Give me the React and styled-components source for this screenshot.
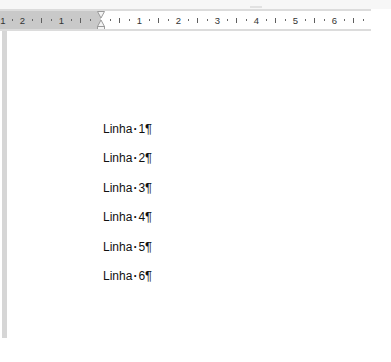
import React from 'react';
import styled, { createGlobalStyle } from 'styled-components';

const GlobalStyle = createGlobalStyle`
  html, body {
    margin: 0;
    background: #ffffff;
  }
  body {
    font-family: "Liberation Sans", Arial, sans-serif;
    overflow: hidden;
  }
`;

const TICK = 9.75;

// ruler marks from left edge, 0 sits under the indent marker
const marks = [
  '1', '.', '2', '.', '|', '.', '1', '.', '|', '.',
  'm',
  '.', '|', '.', '1', '.', '|', '.', '2', '.', '|', '.', '3', '.', '|', '.',
  '4', '.', '|', '.', '5', '.', '|', '.', '6', '.', '|', '.',
];

const lines = ['Linha', 'Linha', 'Linha', 'Linha', 'Linha', 'Linha'];

export default function App() {
  return (
    <Screen>
      <GlobalStyle />
      <TopStrip>
        <Grip />
      </TopStrip>
      <RulerRow>
        <Ruler>
          <Margin />
          <Ticks>
            {marks.map((m, i) => (
              <Cell key={i}>
                {m === '.' && <Dot />}
                {m === '|' && <Half />}
                {m !== '.' && m !== '|' && m !== 'm' && <Num>{m}</Num>}
              </Cell>
            ))}
          </Ticks>
          <IndentMarker width="10" height="22" viewBox="0 0 10 22">
            <path d="M1.5 0.5 H8.5 L5 7 Z" fill="#f4f4f4" stroke="#9a9a9a" strokeWidth="1" />
            <path d="M5 9 L8.5 15.5 H1.5 Z" fill="#f4f4f4" stroke="#9a9a9a" strokeWidth="1" />
            <rect x="1.5" y="15.5" width="7" height="5" fill="#f4f4f4" stroke="#9a9a9a" strokeWidth="1" />
          </IndentMarker>
        </Ruler>
      </RulerRow>
      <Body>
        <SideBar />
        <Page>
          {lines.map((t, i) => (
            <Line key={i}>
              {t}
              <Space>·</Space>
              {i + 1}
              <Pilcrow>¶</Pilcrow>
            </Line>
          ))}
        </Page>
      </Body>
    </Screen>
  );
}

const Screen = styled.div`
  width: 391px;
  height: 362px;
  background: #ffffff;
`;

const TopStrip = styled.div`
  height: 9px;
  background: #f7f7f7;
  display: flex;
  padding-left: 250px;
`;

const Grip = styled.div`
  width: 12px;
  height: 2px;
  margin-top: 6px;
  background: #e2e2e2;
`;

const RulerRow = styled.div`
  height: 22px;
  display: flex;
`;

const Ruler = styled.div`
  position: relative;
  width: 371px;
  height: 18px;
  border-top: 2px solid #dcdcdc;
  border-bottom: 2px solid #dcdcdc;
  background: #ffffff;
  overflow: hidden;
`;

const Margin = styled.div`
  position: absolute;
  left: 0;
  top: 0;
  width: 101px;
  height: 100%;
  background: #c9c9c9;
`;

const Ticks = styled.div`
  position: relative;
  display: flex;
  height: 100%;
  margin-left: -2px;
`;

const Cell = styled.div`
  flex: 0 0 ${TICK}px;
  display: flex;
  align-items: center;
  justify-content: center;
`;

const Num = styled.span`
  font-size: 9.5px;
  line-height: 9px;
  color: #333333;
`;

const Dot = styled.span`
  width: 1px;
  height: 2px;
  background: #6a6a6a;
`;

const Half = styled.span`
  width: 1px;
  height: 5px;
  background: #5e5e5e;
`;

const IndentMarker = styled.svg`
  position: absolute;
  left: 96px;
  top: 0;
  overflow: visible;
`;

const Body = styled.div`
  display: flex;
`;

const SideBar = styled.div`
  width: 5px;
  height: 307px;
  margin-left: 2px;
  background: #d6d6d6;
`;

const Page = styled.div`
  display: flex;
  flex-direction: column;
  padding: 84px 0 0 96px;
`;

const Line = styled.div`
  height: 29.4px;
  font-size: 12px;
  line-height: 29.4px;
  color: #111111;
`;

const Space = styled.span`
  font-weight: bold;
  margin: 0 1px;
`;

const Pilcrow = styled.span`
  font-size: 13px;
  line-height: 0;
`;
